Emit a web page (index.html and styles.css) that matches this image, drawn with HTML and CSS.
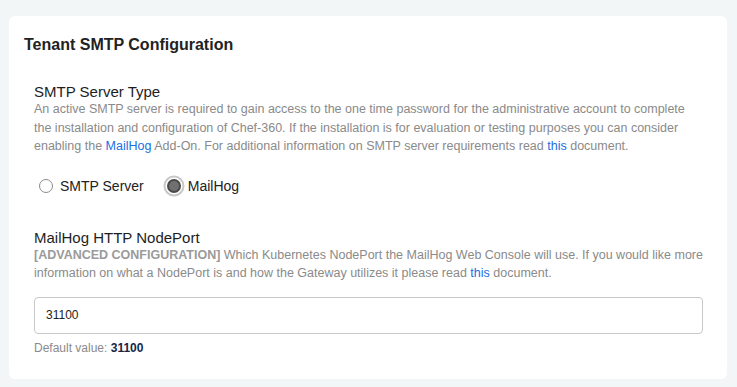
FILE: index.html
```html
<!DOCTYPE html>
<html lang="en">
  <head>
    <meta charset="utf-8" />
    <title>Tenant SMTP Configuration</title>
    <link rel="stylesheet" href="styles.css">
  </head>
  <body>
    <main class="card">
      <h1 class="card-title">Tenant SMTP Configuration</h1>

      <section class="field">
        <h2 class="field-label">SMTP Server Type</h2>
        <p class="field-help">
          An active SMTP server is required to gain access to the one time password for the administrative account to complete<br>
          the installation and configuration of Chef-360. If the installation is for evaluation or testing purposes you can consider<br>
          enabling the <a href="#">MailHog</a> Add-On. For additional information on SMTP server requirements read <a href="#">this</a> document.
        </p>
        <div class="radio-row">
          <label class="radio">
            <input type="radio" name="smtp_type" value="smtp" />
            <span>SMTP Server</span>
          </label>
          <label class="radio">
            <input type="radio" name="smtp_type" value="mailhog" checked />
            <span>MailHog</span>
          </label>
        </div>
      </section>

      <section class="field field-port">
        <h2 class="field-label">MailHog HTTP NodePort</h2>
        <p class="field-help">
          <strong>[ADVANCED CONFIGURATION]</strong> Which Kubernetes NodePort the MailHog Web Console will use. If you would like more<br>
          information on what a NodePort is and how the Gateway utilizes it please read <a href="#">this</a> document.
        </p>
        <input type="text" class="text-input" name="mailhog_nodeport" value="31100" />
        <p class="default-value">Default value: <b>31100</b></p>
      </section>
    </main>
  </body>
</html>
```

FILE: styles.css
```css
body {
  margin: 0;
  padding: 16px 10px 8px 9px;
  background: #f3f6f7;
  font-family: "Liberation Sans", Arial, sans-serif;
  color: #222222;
}

.card {
  width: 718px;
  box-sizing: border-box;
  background: #ffffff;
  border-radius: 6px;
  padding: 19px 24px 23px 15px;
}

.card-title {
  margin: 0;
  font-size: 16px;
  line-height: 20px;
  font-weight: bold;
  color: #222222;
}

.field {
  margin: 29px 0 0 10px;
}

.field-port {
  margin-top: 34px;
}

.field-label {
  margin: 0;
  font-size: 15px;
  line-height: 16px;
  font-weight: normal;
  color: #1e1e1e;
}

.field-help {
  margin: 0;
  font-size: 12.5px;
  line-height: 18.5px;
  color: #8a8a8a;
  white-space: nowrap;
}

.field-help strong {
  font-weight: bold;
  color: #9a9a9a;
}

.field-help a {
  color: #1a6fe0;
  text-decoration: none;
}

.radio-row {
  display: flex;
  align-items: center;
  gap: 23px;
  margin-top: 20px;
  padding-left: 5px;
  height: 20px;
}

.radio {
  display: flex;
  align-items: center;
  gap: 7px;
  font-size: 14px;
  color: #222222;
}

.radio input {
  appearance: none;
  -webkit-appearance: none;
  margin: 0;
  width: 14px;
  height: 14px;
  box-sizing: border-box;
  border: 1px solid #8c8c8c;
  border-radius: 50%;
  background: #ffffff;
}

.radio input:checked {
  border: 2px solid #4a4a4a;
  background: #707070;
  box-shadow: 0 0 0 1.5px #ffffff, 0 0 0 3.5px #c8c8c8;
}

.text-input {
  display: block;
  width: 100%;
  height: 37px;
  box-sizing: border-box;
  margin-top: 14px;
  padding: 0 11px;
  border: 1px solid #c8c8c8;
  border-radius: 4px;
  font-family: "Liberation Sans", Arial, sans-serif;
  font-size: 12px;
  color: #222222;
}

.default-value {
  margin: 6px 0 0 0;
  font-size: 12px;
  line-height: 16px;
  color: #8a8a8a;
}

.default-value b {
  color: #14274a;
}
```
